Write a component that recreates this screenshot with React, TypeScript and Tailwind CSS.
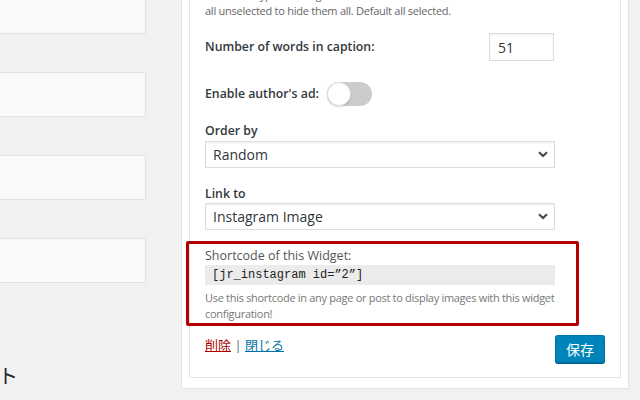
import React from 'react';

const sans = "font-['Open_Sans','Noto_Sans_CJK_JP',sans-serif]";

const Chevron: React.FC = () => (
  <svg width="10" height="7" viewBox="0 0 10 7" className="shrink-0">
    <path d="M1 1.2 L5 5 L9 1.2" fill="none" stroke="#4a4a4a" strokeWidth="2.2" />
  </svg>
);

const SelectBox: React.FC<{ value: string }> = ({ value }) => (
  <div className="flex h-[27px] w-[350px] items-center justify-between border border-[#dddddd] bg-white pl-[7px] pr-[6px] text-[14px] text-[#32373c] shadow-[inset_0_1px_2px_rgba(0,0,0,0.07)]">
    <span>{value}</span>
    <Chevron />
  </div>
);

const LeftBox: React.FC<{ first?: boolean }> = ({ first }) => (
  <div
    className={
      first
        ? 'h-[44px] w-[146px] -mt-[10px] border-r border-b border-[#e2e2e2] bg-[#f9f9f9]'
        : 'mt-[38px] h-[45px] w-[146px] border-y border-r border-[#e2e2e2] bg-[#f9f9f9]'
    }
  />
);

const App: React.FC = () => {
  return (
    <div className={`flex h-[400px] w-[640px] overflow-hidden bg-[#f1f1f1] ${sans}`}>
      {/* left column: available / inactive widgets */}
      <div className="w-[181px] shrink-0">
        <LeftBox first />
        <LeftBox />
        <LeftBox />
        <LeftBox />
        <h2 className="mt-[80px] -ml-[222px] whitespace-nowrap text-[20px] leading-[28px] text-[#23282d]">
          使用停止中のウィジェット
        </h2>
        <p className="mt-[6px] -ml-[10px] whitespace-nowrap text-[13px] text-[#555]">
          サイドバーから削除したウィジェットをここに
        </p>
      </div>

      {/* right column: sidebar holder */}
      <div className="w-[448px] shrink-0">
        <div className="-mt-[13px] border-x border-b border-[#e5e5e5] bg-white px-[7px] pb-[10px]">
          <div className="border-x border-b border-[#e5e5e5] bg-white px-[15px] pb-[14px] text-[#32373c]">
            <p className="text-[11px] leading-[16px] tracking-[-0.25px] text-[#666]">
              Check the types of images to show. Leave all selected to show
              <br />
              all unselected to hide them all. Default all selected.
            </p>

            <div className="mt-[14px] flex h-[28px] items-center">
              <label className="w-[284px] text-[12.3px] font-semibold">Number of words in caption:</label>
              <div className="flex h-[28px] w-[65px] items-center border border-[#dddddd] pl-[8px] text-[14px] shadow-[inset_0_1px_2px_rgba(0,0,0,0.07)]">
                51
              </div>
            </div>

            <div className="mt-[21px] flex h-[24px] items-center gap-[8px]">
              <label className="text-[12.3px] font-semibold">Enable author's ad:</label>
              <div className="flex h-[24px] w-[45px] items-center rounded-full bg-[#cccccc]">
                <div className="h-[24px] w-[24px] rounded-full border border-[#e0e0e0] bg-white shadow-[0_1px_2px_rgba(0,0,0,0.15)]" />
              </div>
            </div>

            <div className="mt-[16px] text-[12.3px] font-semibold leading-[18px]">Order by</div>
            <div className="mt-[1px]">
              <SelectBox value="Random" />
            </div>

            <div className="mt-[17px] text-[12.3px] font-semibold leading-[18px]">Link to</div>
            <div className="mt-0">
              <SelectBox value="Instagram Image" />
            </div>

            {/* highlighted shortcode block */}
            <div className="mt-[11px] -ml-[19px] w-[393px] rounded-[2px] border-[3px] border-[#b20000] pb-[1px] pl-[16px] pt-[3px]">
              <div className="text-[12.5px] leading-[18px] text-[#555]">Shortcode of this Widget:</div>
              <div className="flex h-[20px] w-[350px] items-center bg-[#ebebeb] pl-[7px] font-['Liberation_Mono',monospace] text-[12px] text-[#222]">
                [jr_instagram id=”2”]
              </div>
              <p className="mt-[5px] whitespace-nowrap text-[11px] leading-[16px] tracking-[-0.3px] text-[#777]">
                Use this shortcode in any page or post to display images with this widget
                <br />
                configuration!
              </p>
            </div>

            <div className="mt-[9px] flex items-start justify-between">
              <div className="mt-[1px] text-[13px] leading-[18px]">
                <a className="text-[#a00] underline">削除</a>
                <span className="text-[#666]"> | </span>
                <a className="text-[#0073aa] underline">閉じる</a>
              </div>
              <button className="h-[28px] rounded-[3px] border border-[#0073aa] border-b-[#006799] bg-[#0085ba] px-[10px] text-[14px] text-white shadow-[0_1px_0_#006799]">
                保存
              </button>
            </div>
          </div>
        </div>
      </div>
    </div>
  );
};

export default App;
